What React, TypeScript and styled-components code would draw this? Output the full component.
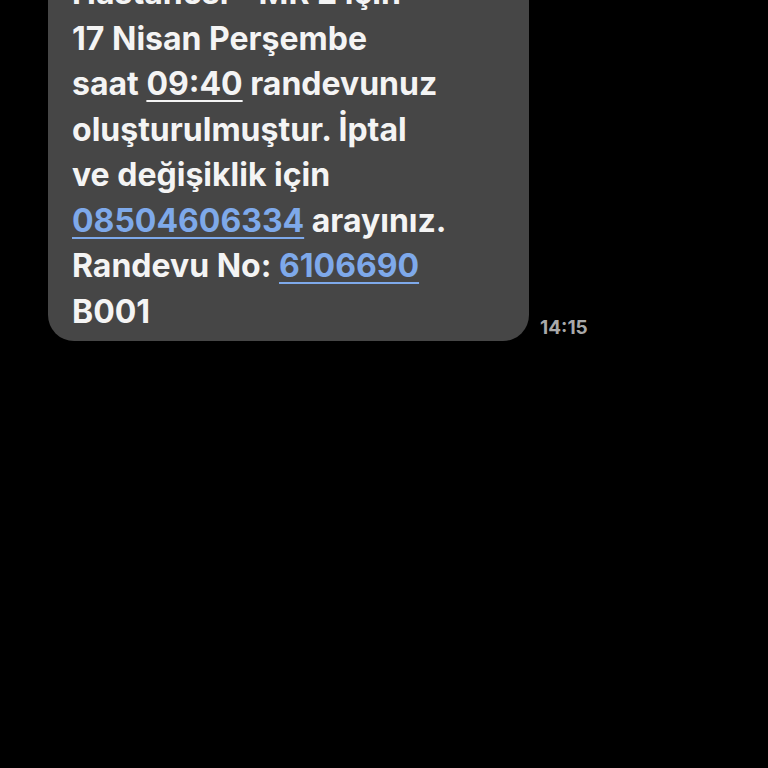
import styled, { createGlobalStyle } from 'styled-components';

const GlobalStyle = createGlobalStyle`
	html, body {
		margin: 0;
		padding: 0;
		background: #000;
	}
	body {
		font-family: Inter, "Noto Sans", "Liberation Sans", sans-serif;
		overflow: hidden;
	}
`;

const Screen = styled.div`
	width: 768px;
	height: 768px;
	background: #000;
	overflow: hidden;
`;

const Thread = styled.div`
	display: flex;
	flex-direction: column;
	margin-top: -44px;
	padding-left: 48px;
`;

const MessageRow = styled.div`
	display: flex;
	align-items: flex-end;
	gap: 11px;
`;

const Bubble = styled.div`
	width: 481px;
	box-sizing: border-box;
	background: #464646;
	border-radius: 26px;
	padding: 14px 20px 7px 24px;
	color: #f4f4f4;
	font-size: 32px;
	font-weight: 700;
	line-height: 45.5px;
	letter-spacing: 0;
`;

const Underlined = styled.span<{ $link?: boolean }>`
	color: ${p => (p.$link ? '#7ea9ea' : 'inherit')};
	text-decoration: underline;
	text-decoration-thickness: 2px;
	text-underline-offset: 5px;
`;

const Time = styled.span`
	color: #a9a9a9;
	font-size: 19px;
	font-weight: 700;
	margin-bottom: 2px;
`;

const App = () => {
	return (
		<Screen>
			<GlobalStyle />
			<Thread>
				<MessageRow>
					<Bubble>
						Hastanesi - MR 2 için
						<br />
						17 Nisan Perşembe
						<br />
						saat <Underlined>09:40</Underlined> randevunuz
						<br />
						oluşturulmuştur. İptal
						<br />
						ve değişiklik için
						<br />
						<Underlined $link>08504606334</Underlined> arayınız.
						<br />
						Randevu No: <Underlined $link>6106690</Underlined>
						<br />
						B001
					</Bubble>
					<Time>14:15</Time>
				</MessageRow>
			</Thread>
		</Screen>
	);
};

export default App;
